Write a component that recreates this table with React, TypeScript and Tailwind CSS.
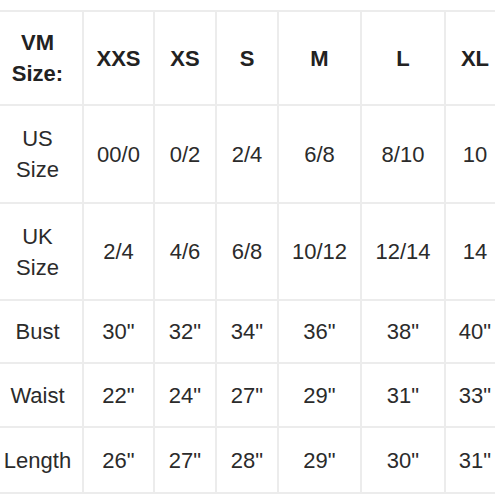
// VM サイズ表 — 固定幅の表組み (右端は画面外にはみ出す)
const SIZES = ["XXS", "XS", "S", "M", "L", "XL"];

const ROWS: { label: string[]; values: string[]; h: string }[] = [
  { label: ["US", "Size"], values: ["00/0", "0/2", "2/4", "6/8", "8/10", "10"], h: "h-[98px]" },
  { label: ["UK", "Size"], values: ["2/4", "4/6", "6/8", "10/12", "12/14", "14"], h: "h-[97px]" },
  { label: ["Bust"], values: ['30"', '32"', '34"', '36"', '38"', '40"'], h: "h-[63px]" },
  { label: ["Waist"], values: ['22"', '24"', '27"', '29"', '31"', '33"'], h: "h-[64px]" },
  { label: ["Length"], values: ['26"', '27"', '28"', '29"', '30"', '31"'], h: "h-[66px]" },
];

const COL_W = ["w-[91px]", "w-[71px]", "w-[62px]", "w-[62px]", "w-[83px]", "w-[84px]", "w-[60px]"];

const cell = "border-2 border-[#ececec] text-center align-middle p-0";

export default function App() {
  return (
    <div
      className="w-[495px] h-[495px] overflow-hidden bg-white text-[#2b2b2b]"
      style={{ fontFamily: '"Liberation Sans", Arial, Helvetica, sans-serif' }}
    >
      <table className="table-fixed border-collapse mt-[10px] -ml-[9px] w-[513px] text-[22px] leading-[31px]">
        <colgroup>
          {COL_W.map((w, i) => (
            <col key={i} className={w} />
          ))}
        </colgroup>
        <thead>
          <tr className="h-[94px] font-bold text-[#222]">
            <th className={cell}>
              VM
              <br />
              Size:
            </th>
            {SIZES.map((s) => (
              <th key={s} className={cell}>
                {s}
              </th>
            ))}
          </tr>
        </thead>
        <tbody>
          {ROWS.map((r) => (
            <tr key={r.label.join(" ")} className={r.h}>
              <td className={cell}>
                {r.label.map((l, i) => (
                  <div key={i}>{l}</div>
                ))}
              </td>
              {r.values.map((v, i) => (
                <td key={i} className={cell}>
                  {v}
                </td>
              ))}
            </tr>
          ))}
        </tbody>
      </table>
    </div>
  );
}
